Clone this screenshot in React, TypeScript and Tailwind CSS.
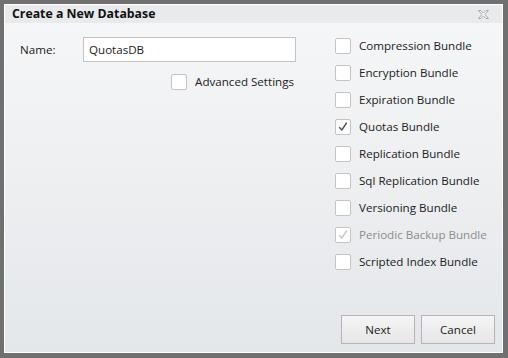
import React from 'react';

interface BundleOption {
  label: string;
  checked?: boolean;
  disabled?: boolean;
}

const bundles: BundleOption[] = [
  { label: 'Compression Bundle' },
  { label: 'Encryption Bundle' },
  { label: 'Expiration Bundle' },
  { label: 'Quotas Bundle', checked: true },
  { label: 'Replication Bundle' },
  { label: 'Sql Replication Bundle' },
  { label: 'Versioning Bundle' },
  { label: 'Periodic Backup Bundle', checked: true, disabled: true },
  { label: 'Scripted Index Bundle' },
];

const CheckBox: React.FC<{ checked?: boolean; disabled?: boolean }> = ({ checked, disabled }) => (
  <div className="w-[16px] h-[16px] shrink-0 bg-white border border-[#c4c4c4] rounded-[2px] flex items-center justify-center">
    {checked && (
      <svg width="12" height="12" viewBox="0 0 12 12">
        <path
          d="M2.5 6.5 L4.8 9 L9.5 2"
          fill="none"
          stroke={disabled ? '#c9c9c9' : '#555555'}
          strokeWidth="1.4"
          strokeLinecap="round"
          strokeLinejoin="round"
        />
      </svg>
    )}
  </div>
);

const CloseIcon: React.FC = () => (
  <svg width="13" height="11" viewBox="0 0 13 11">
    <path
      d="M1.5 1.5 H4 L6.5 4 L9 1.5 H11.5 L8 5.5 L11.5 9.5 H9 L6.5 7 L4 9.5 H1.5 L5 5.5 Z"
      fill="#f4f4f4"
      stroke="#a9a9a9"
      strokeWidth="1"
      strokeLinejoin="round"
    />
  </svg>
);

export default function App() {
  return (
    <div
      className="w-[508px] h-[358px] bg-[#707070] pt-[4px] pl-[4px] pr-[5px] pb-[5px] text-[11.6px] text-[#222222]"
      style={{ fontFamily: '"Open Sans", "Noto Sans", sans-serif' }}
    >
      <div className="w-full h-full border border-white flex flex-col bg-linear-to-b from-[#f6f7f8] to-[#e4e7ea]">
        {/* Title bar */}
        <div className="h-[18px] shrink-0 bg-[#e8eaec] flex items-center justify-between pl-[7px] pr-[12px]">
          <span className="font-bold text-[12.3px] text-[#111111] leading-none">Create a New Database</span>
          <CloseIcon />
        </div>

        {/* Body */}
        <div className="flex-1 flex">
          <div className="w-[330px] shrink-0 pl-[15px] pt-[14px]">
            <div className="w-[276px] flex flex-col">
              <div className="flex items-center">
                <span className="w-[63px] shrink-0">Name:</span>
                <div className="w-[213px] h-[25px] bg-white border border-[#c3c3c3] flex items-center pl-[5px]">
                  QuotasDB
                </div>
              </div>
              <div className="flex items-center justify-end gap-[8px] mt-[11px] pr-[1px]">
                <CheckBox />
                <span className="pr-[1px]">Advanced Settings</span>
              </div>
            </div>
          </div>

          <div className="flex-1 pt-[9px]">
            {bundles.map((b) => (
              <div key={b.label} className="h-[27px] flex items-center gap-[8px]">
                <CheckBox checked={b.checked} disabled={b.disabled} />
                <span className={b.disabled ? 'text-[#8c8c8c]' : ''}>{b.label}</span>
              </div>
            ))}
          </div>
        </div>

        {/* Footer */}
        <div className="flex justify-end gap-[6px] pr-[7px] pb-[8px]">
          <button className="w-[74px] h-[29px] border border-[#bdb0b9] bg-linear-to-b from-[#f5f5f5] to-[#e6e6e6] text-[#222222]">
            Next
          </button>
          <button className="w-[74px] h-[29px] border border-[#bdb0b9] bg-linear-to-b from-[#f5f5f5] to-[#e6e6e6] text-[#222222]">
            Cancel
          </button>
        </div>
      </div>
    </div>
  );
}
